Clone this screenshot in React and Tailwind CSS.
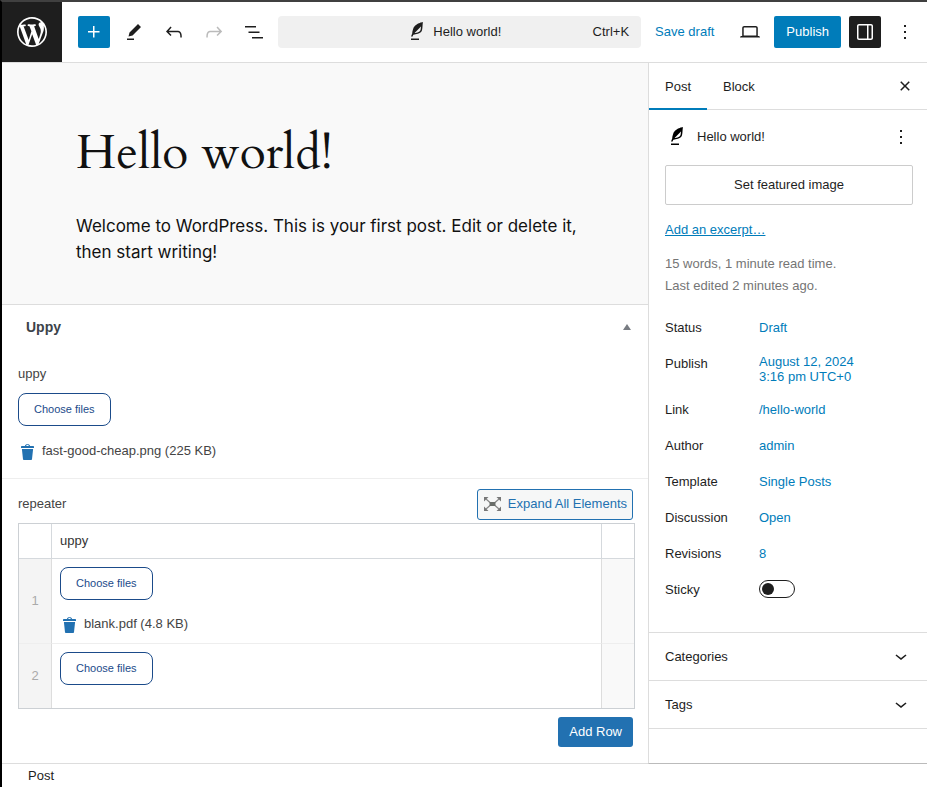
import React from 'react';

const PATHS = {
  wordpress:
    'M20 10c0-5.51-4.49-10-10-10C4.48 0 0 4.49 0 10c0 5.52 4.48 10 10 10 5.51 0 10-4.48 10-10zM7.78 15.37L4.37 6.22c.55-.02 1.17-.08 1.17-.08.5-.06.44-1.13-.06-1.11 0 0-1.45.11-2.37.11-.18 0-.37 0-.58-.01C4.12 2.69 6.87 1.11 10 1.11c2.33 0 4.45.87 6.05 2.34-.68-.11-1.65.39-1.65 1.58 0 .74.45 1.36.9 2.1.35.61.55 1.36.55 2.46 0 1.49-1.4 5-1.4 5l-3.03-8.37c.54-.02.82-.17.82-.17.5-.05.44-1.25-.06-1.22 0 0-1.44.12-2.38.12-.87 0-2.33-.12-2.33-.12-.5-.03-.56 1.2-.06 1.22l.92.08 1.26 3.41zM17.41 10c.24-.64.74-1.87.43-4.25.7 1.29 1.05 2.71 1.05 4.25 0 3.29-1.73 6.24-4.4 7.78.97-2.59 1.94-5.2 2.92-7.78zM6.1 18.09C3.12 16.65 1.11 13.53 1.11 10c0-1.3.23-2.48.72-3.59C3.25 10.3 4.67 14.2 6.1 18.09zm4.03-6.63l2.58 6.98c-.86.29-1.76.45-2.71.45-.79 0-1.57-.11-2.29-.33.81-2.38 1.62-4.74 2.42-7.1z',
  plus: 'M11 12.5V17.5H12.5V12.5H17.5V11H12.5V6H11V11H6V12.5H11Z',
  edit: 'm19 7-3-3-8.5 8.5-1 4 4-1L19 7Zm-7 11.5H5V20h7v-1.5Z',
  undo: 'M18.3 11.7c-.6-.6-1.4-.9-2.3-.9H6.7l2.9-3.3-1.1-1-4.5 5L8.5 16l1-1-2.7-2.7H16c.5 0 .9.2 1.3.5 1 1 1 3.4 1 4.5v.3h1.5v-.2c0-1.5 0-4.3-1.5-5.7z',
  redo: 'M15.6 6.5l-1.1 1 2.9 3.3H8c-.9 0-1.7.3-2.3.9-1.4 1.5-1.4 4.2-1.4 5.6v.2h1.5v-.3c0-1.1 0-3.5 1-4.5.3-.3.7-.5 1.3-.5h9.2L14.5 15l1.1 1.1 4.6-4.6-4.6-5z',
  list: 'M3 6h11v1.5H3V6Zm3.5 5.5h11V13h-11v-1.5ZM21 17H10v1.5h11V17Z',
  desktop:
    'M20.5 16h-.7V8c0-1.1-.9-2-2-2H6.2c-1.1 0-2 .9-2 2v8h-.7c-.8 0-1.5.7-1.5 1.5h20c0-.8-.7-1.5-1.5-1.5zM5.7 8c0-.3.2-.5.5-.5h11.6c.3 0 .5.2.5.5v7.6H5.7V8z',
  drawer:
    'M18 4H6c-1.1 0-2 .9-2 2v12c0 1.1.9 2 2 2h12c1.1 0 2-.9 2-2V6c0-1.1-.9-2-2-2zm-4 14.5H6c-.3 0-.5-.2-.5-.5V6c0-.3.2-.5.5-.5h8v13zm4.5-.5c0 .3-.2.5-.5.5h-2.5v-13H18c.3 0 .5.2.5.5v12z',
  more: 'M13 19h-2v-2h2v2zm0-6h-2v-2h2v2zm0-6h-2V5h2v2z',
  close:
    'M12 13.06l3.712 3.713 1.061-1.06L13.061 12l3.712-3.712-1.06-1.06L12 10.938 8.288 7.227l-1.061 1.06L10.939 12l-3.712 3.712 1.06 1.061L12 13.061z',
  chevron: 'M17.5 11.6L12 16l-5.5-4.4.9-1.2L12 14l4.5-3.6 1 1.2z',
  verse:
    'M17.8 2l-.9.3c-.1 0-3.6 1-5.2 2.1C10 5.5 9.3 6.5 8.9 7.1c-.6.9-1.7 4.7-1.7 6.3l-.9 2.3c-.2.4 0 .8.4 1 .1 0 .2.1.3.1.3 0 .6-.2.7-.5l.6-1.5c.3 0 .7-.1 1.2-.2.7-.1 1.4-.3 2.2-.5.8-.2 1.6-.5 2.4-.8.7-.3 1.4-.7 1.9-1.2s.8-1.2 1-1.9c.2-.7.3-1.6.4-2.4.1-.8.1-1.7.2-2.5 0-.8.1-1.5.2-2.1V2zm-1.9 5.6c-.1.8-.2 1.5-.3 2.1-.2.6-.4 1-.6 1.3-.3.3-.8.6-1.4.9-.7.3-1.4.5-2.2.8-.6.2-1.3.3-1.8.4L15 7.5c.3-.3.6-.7 1-1.1 0 .4 0 .8-.1 1.2zM6 20h8v-1.5H6V20z',
};

function Icon({ name, className = 'size-6', viewBox = '0 0 24 24' }) {
  return (
    <svg viewBox={viewBox} className={`shrink-0 ${className}`} fill="currentColor" aria-hidden="true">
      <path d={PATHS[name]} />
    </svg>
  );
}

function IconButton({ name, label, className = '', ...rest }) {
  return (
    <button
      type="button"
      aria-label={label}
      className={`flex size-8 shrink-0 items-center justify-center rounded-xs ${className}`}
      {...rest}
    >
      <Icon name={name} />
    </button>
  );
}

function ChooseFiles() {
  return (
    <button
      type="button"
      className="block h-[33px] rounded-lg border border-[#1b4b8a] bg-white px-[15px] pb-0.5 text-[11px] leading-4 text-[#1b4b8a]"
    >
      Choose files
    </button>
  );
}

function FileRow({ children }) {
  return (
    <div className="flex items-center gap-2 pl-[3px] text-[13px] leading-5">
      <button type="button" aria-label="Remove file" className="pt-0.5 text-[#2271b1]">
        <svg viewBox="0 0 13 16" className="h-4 w-[13px]" fill="currentColor" aria-hidden="true">
          <path d="M4 2C4 .8 5 .2 6.500 .2S9 .8 9 2h3.300q.7 0 .7.700V4H0V2.700Q0 2 .7 2Zm1.200 0h2.600c0-.6-.5-.9-1.300-.9S5.200 1.400 5.200 2ZM.9 5h11.200L11 15.200q-.1.800-.8.800H2.800q-.7 0-.8-.8Z" />
        </svg>
      </button>
      <span>{children}</span>
    </div>
  );
}

function ExpandIcon() {
  return (
    <svg viewBox="0 0 17 14" className="h-3.5 w-[17px] shrink-0" aria-hidden="true">
      <path
        d="M0 0h4.500L0 4.500ZM17 0h-4.500L17 4.500ZM0 14h4.500L0 9.500ZM17 14h-4.500L17 9.500Z"
        fill="#777"
      />
      <path d="M2 2l4 3.500M15 2l-4 3.500M2 12l4-3.500M15 12l-4-3.500" stroke="#888" strokeWidth="1.2" />
      <path d="M5.500 5h6v4h-6z" fill="#6a6e6a" />
    </svg>
  );
}

function Header() {
  return (
    <header className="flex h-[61px] items-center gap-2 border-b border-[#ddd] pr-1.5">
      <a
        href="#posts"
        aria-label="View posts"
        className="mr-2 flex size-[60px] shrink-0 items-center justify-center bg-[#1e1e1e] text-white"
      >
        <Icon name="wordpress" viewBox="-2 -2 24 24" className="size-9" />
      </a>
      <IconButton name="plus" label="Add block" className="bg-[#007cba] text-white" />
      <IconButton name="edit" label="Tools" />
      <IconButton name="undo" label="Undo" />
      <IconButton name="redo" label="Redo" className="text-[#bbb]" disabled />
      <IconButton name="list" label="Document overview" />
      <button
        type="button"
        className="flex h-8 min-w-0 flex-1 items-center rounded-sm bg-[#f0f0f0] pr-3 pl-9"
      >
        <span className="flex flex-1 items-center justify-center gap-1">
          <Icon name="verse" />
          <span>Hello world!</span>
        </span>
        <span>Ctrl+K</span>
      </button>
      <button type="button" className="h-8 shrink-0 pr-3 pl-1.5 text-[#007cba]">
        Save draft
      </button>
      <IconButton name="desktop" label="View" />
      <button type="button" className="h-8 shrink-0 rounded-xs bg-[#007cba] px-3 text-white">
        Publish
      </button>
      <IconButton name="drawer" label="Settings" className="bg-[#1e1e1e] text-white" />
      <IconButton name="more" label="Options" />
    </header>
  );
}

function Repeater() {
  const num = 'border-r border-[#ddd] bg-[#f4f4f4] text-center align-middle font-normal text-[#aaa]';
  const end = 'border-l border-[#ddd] bg-[#f9f9f9]';
  return (
    <table className="w-full border-separate border-spacing-0 border border-[#ccd0d4]">
      <thead>
        <tr className="h-[35px]">
          <th className="w-[33px] border-r border-b border-[#d5d9dd]" aria-label="Row" />
          <th className="border-b border-[#d5d9dd] px-2 text-left font-normal text-[#333]">uppy</th>
          <th className="w-[33px] border-b border-l border-[#d5d9dd]" aria-label="Actions" />
        </tr>
      </thead>
      <tbody>
        <tr>
          <th scope="row" className={`border-b border-b-[#eee] ${num}`}>1</th>
          <td className="border-b border-[#eee] p-2 pb-[9px]">
            <ChooseFiles />
            <div className="mt-3.5">
              <FileRow>blank.pdf (4.8 KB)</FileRow>
            </div>
          </td>
          <td className={`border-b border-b-[#eee] ${end}`} />
        </tr>
        <tr className="h-16">
          <th scope="row" className={num}>2</th>
          <td className="p-2 align-top">
            <ChooseFiles />
          </td>
          <td className={end} />
        </tr>
      </tbody>
    </table>
  );
}

function Editor() {
  return (
    <main className="min-w-0 flex-1">
      <section className="border-b border-[#ddd] bg-[#f9f9f9] pt-[60px] pr-16 pb-[39px] pl-[74px] text-[#111]">
        <h1 className="font-['Cardo','Liberation_Serif',serif] text-5xl leading-[60px]">Hello world!</h1>
        <p className="mt-[30px] font-['Inter',sans-serif] text-[17px] leading-[26px]">
          Welcome to WordPress. This is your first post. Edit or delete it, then start writing!
        </p>
      </section>
      <section className="text-[#444]">
        <div className="flex h-11 items-center justify-between pr-4 pl-6">
          <h2 className="text-sm font-bold text-[#3c434a]">Uppy</h2>
          <button type="button" aria-label="Toggle panel: Uppy" className="text-[#787c82]">
            <svg viewBox="0 0 10 6" className="h-1.5 w-2.5" fill="currentColor" aria-hidden="true">
              <path d="M5 0 9 6H1Z" />
            </svg>
          </button>
        </div>
        <div className="border-b border-[#eee] px-4 pt-[15px] pb-[17px]">
          <h3 className="mb-[9px] leading-5">uppy</h3>
          <ChooseFiles />
          <div className="mt-[15px]">
            <FileRow>fast-good-cheap.png (225 KB)</FileRow>
          </div>
        </div>
        <div className="pt-2.5 pr-[13px] pb-4 pl-4">
          <div className="mb-[3px] flex items-center justify-between pr-0.5">
            <h3 className="pb-0.5">repeater</h3>
            <button
              type="button"
              className="flex h-[31px] items-center gap-[7px] rounded-[3px] border border-[#2271b1] bg-[#f6f7f7] pr-[5px] pb-0.5 pl-1.5 text-[#2271b1]"
            >
              <ExpandIcon />
              Expand All Elements
            </button>
          </div>
          <Repeater />
          <div className="mt-2 flex justify-end pr-0.5">
            <button type="button" className="h-[30px] rounded-[3px] bg-[#2271b1] px-[11px] text-white">
              Add Row
            </button>
          </div>
        </div>
      </section>
    </main>
  );
}

const SUMMARY = [
  ['Status', 'Draft'],
  ['Publish', 'August 12, 2024 3:16 pm UTC+0'],
  ['Link', '/hello-world'],
  ['Author', 'admin'],
  ['Template', 'Single Posts'],
  ['Discussion', 'Open'],
  ['Revisions', '8'],
];

function Sidebar() {
  return (
    <aside className="relative z-10 -mb-px flex w-[279px] shrink-0 flex-col border-b border-l border-b-[#bbb] border-l-[#ddd]">
      <div className="flex h-[47px] items-stretch border-b border-[#ddd] pr-1.5">
        <button type="button" className="-mb-px border-b-2 border-[#007cba] px-4 pt-0.5">
          Post
        </button>
        <button type="button" className="px-4 pt-0.5">
          Block
        </button>
        <IconButton name="close" label="Close settings" className="ml-auto self-center" />
      </div>
      <div className="pt-[11px] pr-3.5 pb-[26px] pl-4">
        <div className="-mr-1 flex items-center">
          <Icon name="verse" className="size-6 text-black" />
          <h2 className="ml-2 flex-1">Hello world!</h2>
          <IconButton name="more" label="Actions" />
        </div>
        <button type="button" className="mt-3 block h-10 w-full rounded-xs border border-[#ccc]">
          Set featured image
        </button>
        <a href="#excerpt" className="mt-[15px] inline-block leading-5 text-[#007cba] underline">
          Add an excerpt…
        </a>
        <div className="mt-[13px] leading-[22px] text-[#757575]">
          <p>15 words, 1 minute read time.</p>
          <p>Last edited 2 minutes ago.</p>
        </div>
        <div className="mt-[15px] flex flex-col gap-1 leading-[15px]">
          {SUMMARY.map(([label, value]) => (
            <div key={label} className="flex items-start">
              <span className="w-[94px] shrink-0 py-2 leading-4">{label}</span>
              <button type="button" className="min-h-[31px] max-w-[110px] py-1.5 text-left text-[#007cba]">
                {value}
              </button>
            </div>
          ))}
          <div className="flex items-start">
            <label htmlFor="sticky" className="w-[94px] py-2 leading-4">
              Sticky
            </label>
            <input
              id="sticky"
              type="checkbox"
              className="mt-1.5 flex h-[18px] w-9 appearance-none items-center rounded-full border border-[#1e1e1e] pl-0.5 before:size-3 before:rounded-full before:bg-[#1e1e1e]"
            />
          </div>
        </div>
      </div>
      {['Categories', 'Tags'].map((title) => (
        <button
          key={title}
          type="button"
          className="flex h-12 items-center justify-between border-t border-[#ddd] pr-3.5 pb-px pl-4"
        >
          <span className="pt-0.5">{title}</span>
          <Icon name="chevron" />
        </button>
      ))}
      <div className="border-t border-[#ddd]" />
    </aside>
  );
}

export default function App() {
  return (
    <div className="flex min-h-screen flex-col border-t-2 border-l-2 border-t-[#404040] border-l-black bg-white font-['Liberation_Sans',Arial,sans-serif] text-[13px] leading-5 text-[#1e1e1e]">
      <Header />
      <div className="flex flex-1">
        <Editor />
        <Sidebar />
      </div>
      <footer className="flex h-6 items-center border-t border-[#ddd] pl-[26px]">Post</footer>
    </div>
  );
}
